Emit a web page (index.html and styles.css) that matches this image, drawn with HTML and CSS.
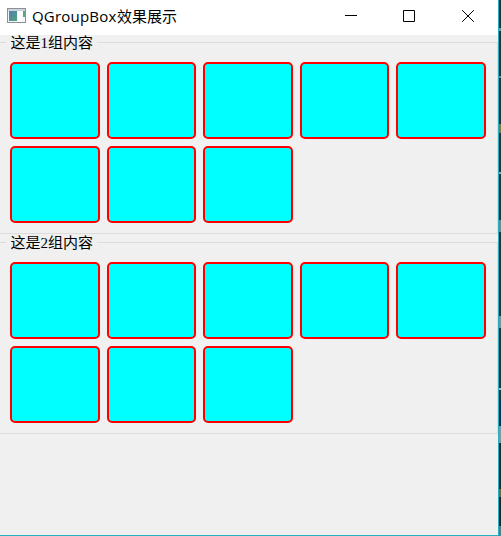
FILE: index.html
```
<!DOCTYPE html>
<html lang="zh-CN">
<head>
<meta charset="utf-8">
<title>QGroupBox效果展示</title>
<link rel="stylesheet" href="styles.css">
</head>
<body>
<div class="window">
  <header class="titlebar">
    <svg class="app-icon" width="19" height="16" viewBox="0 0 19 16">
      <defs><linearGradient id="pane" x1="0" y1="0" x2="1" y2="1"><stop offset="0" stop-color="#4c82b4"/><stop offset="1" stop-color="#56a27c"/></linearGradient></defs>
      <rect x=".5" y=".5" width="18" height="14" fill="#f4f5f6" stroke="#8b9198"/>
      <rect x="1" y="1" width="17" height="2" fill="#cfd4da"/>
      <rect x="2" y="3" width="8" height="10" fill="url(#pane)"/>
      <rect x="11" y="3" width="4" height="10" fill="#fff"/>
      <rect x="16" y="3" width="2" height="6" fill="#62a28a"/>
    </svg>
    <h1 class="caption"><span class="caption-latin">QGroupBox</span>效果展示</h1>
    <div class="controls">
      <svg width="58" height="35" viewBox="0 0 58 35"><path d="M12 15.5h12"/></svg>
      <svg width="58" height="35" viewBox="0 0 58 35"><path d="M12.5 10.5h11v11h-11z"/></svg>
      <svg width="45" height="35" viewBox="0 0 45 35"><path d="M13.2 10.2l11.6 11.6M24.8 10.2L13.2 21.8"/></svg>
    </div>
  </header>
  <main class="content">
    <section class="group">
      <h2 class="group-title">这是1组内容</h2>
      <div class="tiles"><i></i><i></i><i></i><i></i><i></i><i></i><i></i><i></i></div>
    </section>
    <section class="group">
      <h2 class="group-title">这是2组内容</h2>
      <div class="tiles"><i></i><i></i><i></i><i></i><i></i><i></i><i></i><i></i></div>
    </section>
  </main>
</div>
<div class="desktop"></div>
</body>
</html>
```
FILE: styles.css
```
* { box-sizing: border-box; }
body { margin: 0; display: flex; width: 501px; height: 536px; overflow: hidden; }
.window {
  display: flex;
  flex-direction: column;
  width: 499px;
  height: 536px;
  background: #f0f0f0;
  border-right: 1px solid #24b1bd;
  border-bottom: 1px solid #24b1bd;
}
.titlebar { display: flex; height: 35px; background: #fff; }
.app-icon { margin: 8px 6px 0 7px; }
.caption {
  margin: 0;
  font: 400 15px/31px "Noto Sans CJK SC", sans-serif;
  color: #000;
  white-space: nowrap;
}
.caption-latin {
  display: inline-block;
  width: 85px;
  font-family: "Open Sans", sans-serif;
  letter-spacing: 0.2px;
}
.controls { display: flex; width: 161px; margin-left: auto; margin-right: 4px; }
.controls svg { flex: none; fill: none; stroke: #000; stroke-width: 1; }
.content { display: flex; flex-direction: column; gap: 8px; padding-top: 7px; }
.group {
  height: 192px;
  border: 1px solid #dcdcdc;
  border-left: 0;
}
.group-title {
  width: 91px;
  height: 14px;
  margin: -6px 0 0 6px;
  padding-left: 4.5px;
  background: #f0f0f0;
  font: 400 15px/12px "Liberation Serif", "Noto Sans CJK SC", serif;
  color: #000;
  white-space: nowrap;
}
.tiles {
  display: grid;
  grid-template-columns: 90px 89px 90px 89px 90px;
  grid-auto-rows: 77px;
  gap: 7px;
  margin: 11px 0 0 10px;
}
.tiles i { background: #0ff; border: 2px solid #f00; border-radius: 5px; }
.desktop {
  width: 2px;
  background: linear-gradient(#263238 0 28px, #78909c 28px 31px, #263238 31px 76px, #7d8586 76px 78px, #263238 78px 124px, #8b7042 124px 133px, #263238 133px 172px, #8fa5af 172px 174px, #263238 174px 220px, #7c8585 220px 232px, #263238 232px 316px, #858d8d 316px 328px, #263238 328px 388px, #a9bdc5 388px 390px, #263238 390px 400px, #002f4f 400px 426px, #899399 426px 443px, #23292d 443px 489px, #806044 489px 497px, #222628 497px 526px, #63777f 526px);
}
```
